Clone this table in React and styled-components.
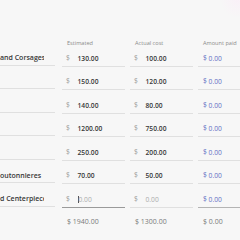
import React from "react";
import styled, { createGlobalStyle, css } from "styled-components";

const Global = createGlobalStyle`
  html, body {
    margin: 0;
    padding: 0;
    width: 240px;
    height: 240px;
    overflow: hidden;
    background: #f7f7f7;
    font-family: "Open Sans", "Noto Sans", sans-serif;
  }
`;

const Page = styled.div`
  width: 240px;
  height: 240px;
  overflow: hidden;
  box-sizing: border-box;
  padding-top: 39px;
  background:
    radial-gradient(circle at 238px 0px, rgba(252, 234, 248, 0.5) 0, rgba(247, 247, 247, 0) 18px),
    #f7f7f7;
`;

const Table = styled.div`
  display: flex;
  flex-direction: column;
  width: 270px;
`;

const Row = styled.div`
  display: grid;
  grid-template-columns: 57px 63px 63px 63px;
  column-gap: 5px;
  margin-top: ${(p) => p.$gap || 0}px;
`;

const HeaderLabel = styled.div`
  height: 8px;
  line-height: 8px;
  padding-left: 5px;
  font-size: 5.6px;
  color: #8a8a8a;
  white-space: nowrap;
`;

const Field = styled.div`
  height: 15px;
  display: flex;
  align-items: center;
  border-bottom: 1px solid ${(p) => p.$line || "#e0e0e0"};
  white-space: nowrap;
  overflow: hidden;
  font-size: 6.7px;
`;

const NameField = styled(Field)`
  width: 55px;
  box-sizing: border-box;
  padding-left: 0;
  padding-right: 11px;
  font-weight: 600;
  font-size: 7px;
  color: #363636;
`;

const NameText = styled.span`
  display: block;
  overflow: hidden;
  width: 100%;
  white-space: nowrap;
  text-overflow: clip;
`;

const MoneyField = styled(Field)`
  padding-left: 4px;
`;

const Dollar = styled.span`
  width: 11.5px;
  flex: none;
  color: #9a9a9a;
  font-weight: 400;
`;

const Value = styled.span`
  font-weight: 600;
  color: ${(p) => (p.$placeholder ? "#ababab" : "#383838")};
  ${(p) =>
    p.$placeholder &&
    css`
      font-weight: 400;
    `}
`;

const Caret = styled.span`
  display: inline-block;
  width: 0.8px;
  height: 7px;
  background: #555;
  margin-right: 0.2px;
`;

const PaidField = styled(Field)`
  padding-left: 5px;
  color: #5f6fc4;
  font-weight: 400;
`;

const Total = styled.div`
  height: 14px;
  line-height: 14px;
  padding-left: 5px;
  font-size: 7px;
  color: #7a7a7a;
  white-space: nowrap;
`;

const items = [
  { name: "and Corsages", est: "130.00", act: "100.00" },
  { name: "", est: "150.00", act: "120.00" },
  { name: "", est: "140.00", act: "80.00" },
  { name: "", est: "1200.00", act: "750.00" },
  { name: "", est: "250.00", act: "200.00" },
  { name: "outonnieres", est: "70.00", act: "50.00" },
  { name: "d Centerpieces", est: "", act: "", focused: true },
];

export default function App() {
  return (
    <>
      <Global />
      <Page>
        <Table>
          <Row>
            <div />
            <HeaderLabel>Estimated</HeaderLabel>
            <HeaderLabel>Actual cost</HeaderLabel>
            <HeaderLabel>Amount paid</HeaderLabel>
          </Row>
          {items.map((it, i) => (
            <Row key={i} $gap={i === 0 ? 3.5 : 7.5}>
              <NameField>
                <NameText>{it.name}</NameText>
              </NameField>
              <MoneyField $line={it.focused ? "#9a9a9a" : undefined}>
                <Dollar>$</Dollar>
                {it.focused && <Caret />}
                <Value $placeholder={!it.est}>{it.est || "0.00"}</Value>
              </MoneyField>
              <MoneyField>
                <Dollar>$</Dollar>
                <Value $placeholder={!it.act}>{it.act || "0.00"}</Value>
              </MoneyField>
              <PaidField $line={it.focused ? "#b4b4b4" : undefined}>$ 0.00</PaidField>
            </Row>
          ))}
          <Row $gap={7.5}>
            <div />
            <Total>$ 1940.00</Total>
            <Total>$ 1300.00</Total>
            <Total>$ 0.00</Total>
          </Row>
        </Table>
      </Page>
    </>
  );
}
